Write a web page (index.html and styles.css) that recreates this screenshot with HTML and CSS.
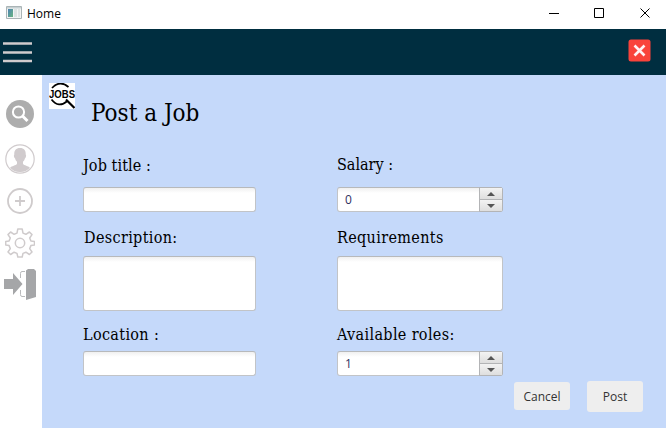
FILE: index.html
```
<!DOCTYPE html>
<html lang="en">
<head>
<meta charset="utf-8">
<title>Home</title>
<link rel="stylesheet" href="styles.css">
</head>
<body>
<header class="titlebar">
  <svg class="app-icon" width="16" height="14" viewBox="0 0 16 14"><defs><linearGradient id="g" x2="1" y2="1"><stop stop-color="#4d83b5"/><stop offset="1" stop-color="#68b580"/></linearGradient></defs><path fill="#f2f4f4" stroke="#aab4b6" d="M.5.5h15v12H.5z"/><path fill="#c7d0d2" d="M1 1h14v1.500H1z"/><path fill="url(#g)" d="M2 3h5v8H2z"/><path fill="#dce3e3" d="M8 3h3v8H8zM12 3h2v8h-2z"/></svg>
  <span class="window-title">Home</span>
  <svg class="window-controls" width="104" height="12" viewBox="0 0 104 12" fill="none" stroke="#000"><path d="M0 6.500h10M45.500 1.500h9v9h-9z"/><path d="M91.500 1.500l9 9m0-9l-9 9"/></svg>
</header>
<div class="toolbar">
  <svg width="30" height="22" viewBox="0 0 30 22"><path d="M0 2.500h29M0 11.500h29M0 20h29" stroke="#d0cbcd" stroke-width="2.500"/></svg>
  <button class="close" aria-label="Close"><svg width="23" height="23" viewBox="0 0 23 23"><rect x=".5" y=".5" width="22" height="22" rx="2.500" fill="#f9433b"/><path d="M6.500 6.500l10 10m0-10l-10 10" stroke="#fff1f3" stroke-width="2.600"/></svg></button>
</div>
<div class="body">
  <nav class="sidebar">
    <svg class="nav-search" width="28" height="28" viewBox="0 0 28 28"><circle cx="14" cy="14" r="14" fill="#adadad"/><circle cx="12.500" cy="12" r="5.600" fill="none" stroke="#fff" stroke-width="2"/><path d="M16.500 16l5 5" stroke="#fff" stroke-width="3"/></svg>
    <svg class="nav-user" width="30" height="30" viewBox="0 0 30 30"><circle cx="15" cy="15" r="14.200" fill="none" stroke="#d0cbcd" stroke-width="1.200"/><path fill="#d0cbcd" d="M15 4c4 0 6 2.500 5.700 6.500.9.500.2 3.500-.8 4-.4 1.500-1 2.500-1.900 3.200v2c1 2 5.300 2 7 4.100A13 13 0 0 1 15 28 13 13 0 0 1 5 23.800c1.700-2.100 6-2.100 7-4.100v-2c-.9-.7-1.500-1.700-1.900-3.200-1-.5-1.700-3.500-.8-4C9 6.500 11 4 15 4z"/></svg>
    <svg class="nav-add" width="26" height="26" viewBox="0 0 26 26" fill="none" stroke="#cfcbcc" stroke-width="1.800"><circle cx="13" cy="13" r="12"/><path d="M13 8v10M8 13h10"/></svg>
    <svg class="nav-gear" width="30" height="30" viewBox="0 0 30 30" fill="none" stroke="#cfcbcc" stroke-width="1.500" stroke-linejoin="round"><circle cx="15" cy="15" r="4.700"/><path d="M12.800 1h4.400l.8 4.100 2.900 1.200L24.400 4 27 6.600 24.700 10l1.200 2.900 3.600.6v3.500l-3.600.6-1.200 3 2.300 3.400-2.600 2.500-3.500-2.300-2.900 1.200-.8 3.600h-4.400l-.8-3.600-2.900-1.200L5.600 26.500 3 24l2.300-3.400-1.200-3-3.400-.6v-3.500l3.400-.6L5.300 10 3 6.600 5.600 4l3.500 2.300L12 5.100z"/></svg>
    <svg class="nav-exit" width="32" height="31" viewBox="0 0 32 31"><path fill="#a5a6a8" d="M0 10h9V4l9.500 11L9 26v-6H0zM22 1.500L24 0h6l2 2v26l-10 3z"/><path fill="none" stroke="#b9babc" d="M21 2.500h-3q-1.500 0-1.500 2V9m0 12v4.500q0 2 1.500 2h3"/></svg>
  </nav>
  <main class="panel">
    <div class="heading">
      <svg class="logo" width="26" height="26" viewBox="0 0 26 26"><path fill="#fff" d="M0 0h26v26H0z"/><path fill="none" stroke="#000" stroke-width="1.700" d="M3 5Q11-3.500 19.500 4M2.500 16.500q7 9 16 1.500"/><path d="M17 16.500l8.500 8.500" stroke="#000" stroke-width="2.200"/><text class="logo-text" x="0" y="15" textLength="26" lengthAdjust="spacingAndGlyphs">JOBS</text></svg>
      <h1>Post a Job</h1>
    </div>
    <form class="form">
      <label>Job title :</label><label class="raised">Salary :</label>
      <input class="field" aria-label="Job title"><div class="field spinner"><span>0</span><div class="steps"><i class="up"></i><i class="down"></i></div></div>
      <label class="nudged">Description:</label><label>Requirements</label>
      <textarea class="field" aria-label="Description"></textarea><textarea class="field" aria-label="Requirements"></textarea>
      <label>Location :</label><label class="roles">Available roles:</label>
      <input class="field" aria-label="Location"><div class="field spinner"><span>1</span><div class="steps"><i class="up"></i><i class="down"></i></div></div>
    </form>
    <div class="actions"><button class="btn">Cancel</button><button class="btn post">Post</button></div>
  </main>
</div>
</body>
</html>
```
FILE: styles.css
```
* { box-sizing: border-box; }
body { margin: 0; width: 666px; height: 428px; overflow: hidden; background: #fff; font-family: "Open Sans", sans-serif; }
svg { display: block; flex: none; }
button { border: 0; padding: 0; font: inherit; }
.titlebar { height: 29px; display: flex; padding-left: 6px; }
.app-icon { margin-top: 6px; }
.window-title { margin-left: 5px; font-size: 12px; line-height: 28px; }
.window-controls { margin: 7px 13px 0 auto; }
.toolbar { height: 46px; background: #002e40; display: flex; justify-content: space-between; padding: 12px 15px 0 3px; }
.close { background: none; height: 23px; margin-top: -2px; }
.body { display: flex; height: 353px; }
.sidebar { width: 42px; flex: none; }
.nav-search { margin: 25px 0 0 6px; }
.nav-user { margin: 16px 0 0 5px; }
.nav-add { margin: 14px 0 0 7px; }
.nav-gear { margin: 14px 0 0 5px; }
.nav-exit { margin: 11px 0 0 4px; }
.panel { flex: 1; background: #c5d9fa; }
.heading { height: 71px; display: flex; padding: 8px 0 0 7px; }
.logo-text { font: bold 10px "Liberation Sans", sans-serif; }
h1 { margin: 13px 0 0 16px; font: 24px/34px "DejaVu Serif Condensed", "DejaVu Serif", serif; font-stretch: condensed; }
.form { display: grid; grid-template-columns: 173px 166px; grid-template-rows: 41px 25px 44px 55px 40px 25px; column-gap: 81px; margin-left: 41px; }
label { font: 16px/22px "DejaVu Serif Condensed", "DejaVu Serif", serif; font-stretch: condensed; letter-spacing: .35px; padding-top: 9px; white-space: nowrap; }
label:nth-of-type(n+3) { padding-top: 15px; }
label:nth-of-type(n+5) { padding-top: 13px; }
label.raised { padding-top: 8px; letter-spacing: 0; }
label:first-child { letter-spacing: .1px; }
.nudged { padding-left: 1px; }
.field { display: block; width: 100%; height: 100%; border: 1px solid #c2c4c7; border-top-color: #b7b9bb; border-radius: 3px; padding: 0; resize: none; background: linear-gradient(#f0f0f0, #fff 5px); }
.spinner { display: flex; justify-content: space-between; font-size: 12px; line-height: 24px; color: #303060; padding-left: 7px; }
.spinner span { flex: 1; }
.steps { width: 24px; margin: -1px; border: 1px solid #b3b4b6; border-radius: 0 3px 3px 0; display: grid; grid-template-rows: 1fr 1fr; gap: 1px; background: #b3b4b6; }
.steps i { display: grid; place-items: center; background: linear-gradient(#f3f3f3, #dedede); }
.steps i::before { content: ""; border: 4px solid transparent; }
.up::before { border-top: 0 !important; border-bottom-color: #555 !important; }
.down::before { border-bottom: 0 !important; border-top-color: #555 !important; }
.actions { display: flex; justify-content: flex-end; align-items: flex-start; gap: 17px; margin: 5px 23px 0 0; }
.btn { width: 56px; height: 28px; border-radius: 3px; background: #eee; color: #333; font-size: 12px; margin-top: 1px; }
.post { height: 31px; margin-top: 0; }
```
